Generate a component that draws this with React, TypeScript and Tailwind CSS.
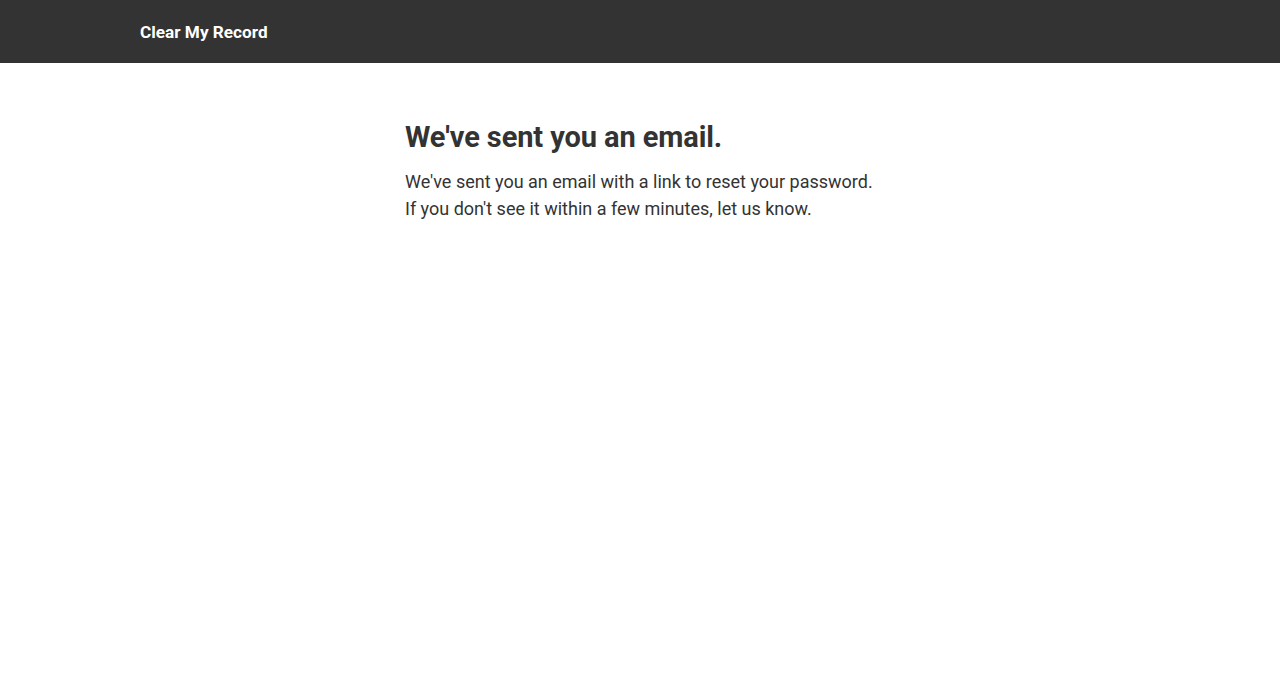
export default function App() {
  return (
    <div className="min-h-screen bg-white" style={{ fontFamily: "Roboto, 'Liberation Sans', sans-serif" }}>
      <header className="h-[63px] bg-[#333333]">
        <div className="mx-auto flex h-full w-[1000px] items-center pt-[2px]">
          <a href="#" className="text-[17.2px] font-bold text-white">
            Clear My Record
          </a>
        </div>
      </header>

      <main className="mx-auto w-[470px] pt-[56px]">
        <h1 className="text-[29px] font-bold leading-[36px] tracking-[-0.1px] text-[#333333]">
          We've sent you an email.
        </h1>
        <p className="mt-[13px] text-[18px] leading-[27px] text-[#333333]">
          We've sent you an email with a link to reset your password.
          <br />
          If you don't see it within a few minutes, let us know.
        </p>
      </main>
    </div>
  );
}
